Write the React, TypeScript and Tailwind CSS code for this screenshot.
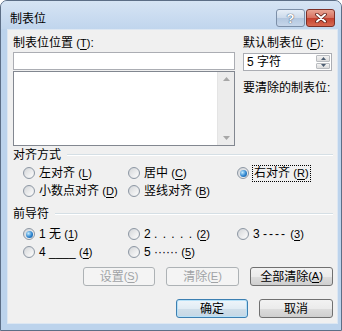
import React from "react";

const F = "font-['Liberation_Sans','Noto_Sans_CJK_SC',sans-serif]";

function Radio({ checked }: { checked?: boolean }) {
  return (
    <span className="inline-flex w-[12px] h-[12px] shrink-0 items-center justify-center rounded-full border border-[#8d97a3] bg-[linear-gradient(135deg,#cfd3d8,#f9f9f9)]">
      {checked ? (
        <span className="w-[7px] h-[7px] rounded-full bg-[radial-gradient(circle_at_35%_35%,#c4ecff,#2c84cf_55%,#15508e)]" />
      ) : (
        <span className="w-[8px] h-[8px] rounded-full bg-[linear-gradient(135deg,#d8dadc,#fbfbfb)]" />
      )}
    </span>
  );
}

function M({ c }: { c: string }) {
  return (
    <span className="text-[11px]">
      (<span className="underline underline-offset-[2px]">{c}</span>)
    </span>
  );
}

function Opt({
  checked,
  focus,
  children,
}: {
  checked?: boolean;
  focus?: boolean;
  children: React.ReactNode;
}) {
  return (
    <div className="flex items-center gap-[4px] h-[18px]">
      <Radio checked={checked} />
      <span
        className={
          focus
            ? "leading-[15px] whitespace-pre outline outline-1 outline-dotted outline-black px-[1px]"
            : "leading-[15px] whitespace-pre"
        }
      >
        {children}
      </span>
    </div>
  );
}

function GroupLabel({ children }: { children: React.ReactNode }) {
  return (
    <div className="flex items-center h-[16px] pl-[5px] pr-[4px]">
      <span className="leading-[16px]">{children}</span>
      <div className="flex-1 ml-[6px] flex flex-col">
        <div className="h-[1px] bg-[#d5dfe5]" />
        <div className="h-[1px] bg-white" />
      </div>
    </div>
  );
}

export default function App() {
  return (
    <div className={`w-[342px] h-[331px] ${F} text-[12px] text-black`}>
      <div className="w-[342px] h-[331px] flex flex-col border border-[#5c6e86] rounded-t-[7px] bg-[#bcd3ec] overflow-hidden">
        {/* Title bar */}
        <div className="h-[28px] flex items-start bg-[linear-gradient(#d6e4f4,#c0d5ed)] pl-[9px] pr-[6px]">
          <span className="mt-[10px] leading-[16px] text-[12px]">制表位</span>
          <div className="ml-auto mt-[8px] flex gap-[1px]">
            <div className="w-[29px] h-[18px] rounded-[3px] border border-[#7c8fa8] bg-[linear-gradient(#e6eef7,#cbd9ea_50%,#b3c7df_51%,#c6d6ea)] flex items-center justify-center">
              <span className="text-[13px] font-bold leading-none text-white [text-shadow:0_0_1px_#3d516b,0_0_1px_#3d516b]">?</span>
            </div>
            <div className="w-[29px] h-[18px] rounded-[3px] border border-[#7d2f26] bg-[linear-gradient(#e8a493,#d7705f_50%,#c4412f_51%,#d86a52)] flex items-center justify-center">
              <svg width="12" height="10" viewBox="0 0 12 10">
                <path d="M2 1.5 L10 8.5 M10 1.5 L2 8.5" stroke="#5b1c14" strokeWidth="3.6" strokeLinecap="round" />
                <path d="M2 1.5 L10 8.5 M10 1.5 L2 8.5" stroke="#ffffff" strokeWidth="2" strokeLinecap="round" />
              </svg>
            </div>
          </div>
        </div>

        {/* Client */}
        <div className="flex-1 ml-[6px] mr-[3px] mb-[6px] bg-[#f0f0f0] border border-[#dde7f2] flex flex-col">
          {/* top section */}
          <div className="flex">
            <div className="ml-[5px] w-[222px] pt-[5px] flex flex-col">
              <div className="h-[16px] leading-[16px]">
                制表位位置 <M c="T" />:
              </div>
              <div className="mt-[1px] h-[18px] bg-white border border-[#abadb3]" />
              <div className="mt-[1px] h-[75px] bg-white border border-[#828790] flex">
                <div className="flex-1" />
                <div className="w-[17px] bg-[#ececec] border-l border-[#e4e4e4] flex flex-col items-center justify-between py-[5px]">
                  <svg width="7" height="4" viewBox="0 0 7 4">
                    <path d="M0 4 L3.5 0 L7 4 Z" fill="#a7a7a7" />
                  </svg>
                  <svg width="7" height="4" viewBox="0 0 7 4">
                    <path d="M0 0 L3.5 4 L7 0 Z" fill="#a7a7a7" />
                  </svg>
                </div>
              </div>
            </div>
            <div className="ml-[8px] w-[89px] pt-[5px] flex flex-col">
              <div className="h-[16px] leading-[16px] whitespace-nowrap">
                默认制表位 <M c="F" />:
              </div>
              <div className="mt-[2px] h-[18px] bg-white border border-[#abadb3] flex">
                <span className="flex-1 pl-[3px] leading-[16px]">5 字符</span>
                <div className="w-[14px] my-[1px] mr-[1px] flex flex-col gap-[1px]">
                  <div className="flex-1 border border-[#b9bcc0] rounded-[1px] bg-[linear-gradient(#f3f3f3,#dcdcdc)] flex items-center justify-center">
                    <svg width="5" height="3" viewBox="0 0 5 3">
                      <path d="M0 3 L2.5 0 L5 3 Z" fill="#4d5e72" />
                    </svg>
                  </div>
                  <div className="flex-1 border border-[#b9bcc0] rounded-[1px] bg-[linear-gradient(#f3f3f3,#dcdcdc)] flex items-center justify-center">
                    <svg width="5" height="3" viewBox="0 0 5 3">
                      <path d="M0 0 L2.5 3 L5 0 Z" fill="#4d5e72" />
                    </svg>
                  </div>
                </div>
              </div>
              <div className="mt-[9px] h-[16px] leading-[16px] whitespace-nowrap">要清除的制表位:</div>
            </div>
          </div>

          {/* Alignment group */}
          <div className="mt-[1px]">
            <GroupLabel>对齐方式</GroupLabel>
          </div>
          <div className="mt-[1px] pl-[15px] flex">
            <div className="w-[105px]">
              <Opt>
                左对齐 <M c="L" />
              </Opt>
              <Opt>
                小数点对齐 <M c="D" />
              </Opt>
            </div>
            <div className="w-[109px]">
              <Opt>
                居中 <M c="C" />
              </Opt>
              <Opt>
                竖线对齐 <M c="B" />
              </Opt>
            </div>
            <div>
              <Opt checked focus>
                右对齐 <M c="R" />
              </Opt>
            </div>
          </div>

          {/* Leader group */}
          <div className="mt-[6px]">
            <GroupLabel>前导符</GroupLabel>
          </div>
          <div className="mt-[3px] pl-[15px] flex">
            <div className="w-[105px]">
              <Opt checked>
                1 无 <M c="1" />
              </Opt>
              <Opt>
                4 ____ <M c="4" />
              </Opt>
            </div>
            <div className="w-[109px]">
              <Opt>
                2 <span className="tracking-[1px]">. . . . .</span> <M c="2" />
              </Opt>
              <Opt>
                5 ······ <M c="5" />
              </Opt>
            </div>
            <div>
              <Opt>
                3 <span className="tracking-[2px]">----</span> <M c="3" />
              </Opt>
            </div>
          </div>

          {/* Buttons row 1 */}
          <div className="mt-[6px] pr-[4px] flex justify-end gap-[11px]">
            <div className="w-[72px] h-[19px] rounded-[3px] border border-[#adb2b5] bg-[#f4f4f4] text-[#a0a3a6] flex items-center justify-center leading-none">
              设置 <M c="S" />
            </div>
            <div className="w-[73px] h-[19px] rounded-[3px] border border-[#adb2b5] bg-[#f4f4f4] text-[#a0a3a6] flex items-center justify-center leading-none">
              清除 <M c="E" />
            </div>
            <div className="w-[83px] h-[19px] rounded-[3px] border border-[#707070] bg-[linear-gradient(#f2f2f2,#ebebeb_50%,#dddddd_51%,#cfcfcf)] flex items-center justify-center leading-none">
              全部清除 <M c="A" />
            </div>
          </div>

          {/* Buttons row 2 */}
          <div className="mt-[13px] pr-[4px] flex justify-end gap-[11px]">
            <div className="w-[72px] h-[19px] rounded-[3px] border border-[#3c7fb1] shadow-[inset_0_0_0_1px_#b6e1f8] bg-[linear-gradient(#eef5fa,#e1ecf4_50%,#d0dfea_51%,#c5d7e5)] flex items-center justify-center leading-none">
              确定
            </div>
            <div className="w-[74px] h-[19px] rounded-[3px] border border-[#707070] bg-[linear-gradient(#f2f2f2,#ebebeb_50%,#dddddd_51%,#cfcfcf)] flex items-center justify-center leading-none">
              取消
            </div>
          </div>
        </div>
      </div>
    </div>
  );
}
